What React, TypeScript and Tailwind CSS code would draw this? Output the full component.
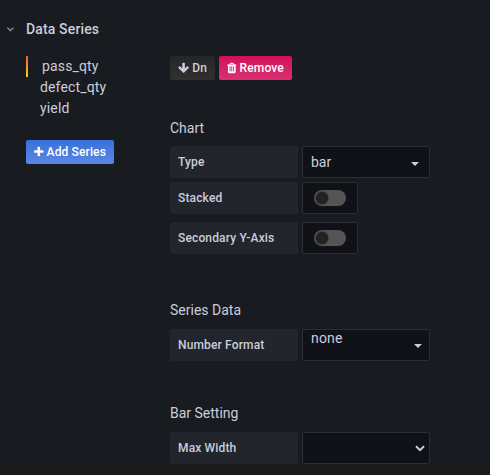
import type { ReactNode } from 'react';

function PlusIcon() {
  return (
    <svg className="mr-[3px] h-3 w-[9.6px] shrink-0 fill-current" viewBox="192 0 1408 1792">
      <path d="M1600 736v192q0 40-28 68t-68 28h-416v416q0 40-28 68t-68 28h-192q-40 0-68-28t-28-68v-416h-416q-40 0-68-28t-28-68v-192q0-40 28-68t68-28h416v-416q0-40 28-68t68-28h192q40 0 68 28t28 68v416h416q40 0 68 28t28 68z" />
    </svg>
  );
}

function ArrowDownIcon() {
  return (
    <svg className="mr-[3px] h-3 w-[11.2px] shrink-0 fill-current" viewBox="64 0 1664 1792">
      <path d="M1675 832q0 53-37 90l-651 652q-39 37-91 37-53 0-90-37l-651-652q-38-36-38-90 0-53 38-91l74-75q39-37 91-37 53 0 90 37l294 294v-704q0-52 38-90t90-38h128q52 0 90 38t38 90v704l294-294q37-37 90-37 52 0 91 37l75 75q37 39 37 91z" />
    </svg>
  );
}

function TrashIcon() {
  return (
    <svg className="mr-[3px] h-3 w-[9.6px] shrink-0 fill-current" viewBox="192 0 1408 1792">
      <path d="M704 1376v-704q0-14-9-23t-23-9h-64q-14 0-23 9t-9 23v704q0 14 9 23t23 9h64q14 0 23-9t9-23zm256 0v-704q0-14-9-23t-23-9h-64q-14 0-23 9t-9 23v704q0 14 9 23t23 9h64q14 0 23-9t9-23zm256 0v-704q0-14-9-23t-23-9h-64q-14 0-23 9t-9 23v704q0 14 9 23t23 9h64q14 0 23-9t9-23zm-544-992h448l-48-117q-7-9-17-11h-317q-10 2-17 11zm928 32v64q0 14-9 23t-23 9h-96v948q0 83-47 143.5t-113 60.5h-832q-66 0-113-58.5t-47-141.5v-952h-96q-14 0-23-9t-9-23v-64q0-14 9-23t23-9h309l70-167q15-37 54-63t79-26h320q40 0 79 26t54 63l70 167h309q14 0 23 9t9 23z" />
    </svg>
  );
}

function Label({ children }: { children: ReactNode }) {
  return (
    <div className="flex h-8 w-32 shrink-0 items-center rounded-xs bg-[#22252b] px-2 text-xs font-medium">
      {children}
    </div>
  );
}

function Row({ label, children, className = '' }: { label: string; children: ReactNode; className?: string }) {
  return (
    <div className={`flex gap-1 ${className}`}>
      <Label>{label}</Label>
      {children}
    </div>
  );
}

function Toggle() {
  return (
    <div className="flex h-8 w-14 items-center justify-center rounded-xs border border-[#2d2e33] bg-[#111217]">
      <div className="flex h-4 w-8 items-center rounded-full bg-[#555555] px-[2px]">
        <div className="size-3 rounded-full bg-[#222222] shadow-[0_0_2px_#111111]" />
      </div>
    </div>
  );
}

function Caret() {
  return (
    <svg className="h-1 w-2 shrink-0 fill-[#ccccdc]" viewBox="0 0 8 4">
      <path d="M0 0h8L4 4z" />
    </svg>
  );
}

function Heading({ children }: { children: ReactNode }) {
  return <h5 className="h-[21px] text-sm leading-[21px] font-normal tracking-normal">{children}</h5>;
}

export default function App() {
  return (
    <div className="flex h-[475px] w-[490px] flex-col overflow-hidden bg-[#181b1f] font-[Roboto,sans-serif] tracking-[0.15px] text-[#ccccdc]">
      <div className="flex h-14 items-start gap-[11px] pt-[18px] pl-[6px]">
        <svg className="mt-[7px] h-[9px] w-[9px]" viewBox="0 0 9 9" fill="none" stroke="#8e9297" strokeWidth="1.3">
          <path d="M1.3 2.6 4.4 5.5 7.5 2.6" />
        </svg>
        <span className="text-sm leading-[22px] font-medium">Data Series</span>
      </div>

      <div className="flex h-[412px] pl-[26px]">
        <div className="w-36 shrink-0">
          <ul className="text-sm leading-[21px]">
            <li className="flex">
              <span className="mr-[14px] w-[2px] bg-linear-to-b from-[#f05a28] to-[#fbca0a]" />
              pass_qty
            </li>
            <li className="pl-[14px]">defect_qty</li>
            <li className="pl-[14px]">yield</li>
          </ul>
          <button className="mt-[21px] flex h-6 w-[88px] items-center rounded-xs bg-linear-to-b from-[#3871dc] to-[#5a87e2] pl-2 text-xs font-medium tracking-[0.13px] whitespace-nowrap text-white">
            <PlusIcon />
            Add Series
          </button>
        </div>

        <div>
          <div className="flex gap-1 text-xs font-medium tracking-[0.13px]">
            <button className="flex h-6 w-[45px] items-center rounded-xs bg-linear-to-b from-[#262628] to-[#303030] pl-2">
              <ArrowDownIcon />
              Dn
            </button>
            <button className="flex h-6 w-[73px] items-center rounded-xs bg-linear-to-b from-[#d10e5c] to-[#d92f72] pl-2 text-white">
              <TrashIcon />
              Remove
            </button>
          </div>

          <section className="mt-[38px]">
            <Heading>Chart</Heading>
            <Row label="Type" className="mt-[7px]">
              <div className="flex h-8 w-32 items-center justify-between rounded-xs border border-[#2d2e33] bg-[#111217] pr-[10px] pl-2 text-sm tracking-normal">
                bar
                <span className="pt-1 leading-none">
                  <Caret />
                </span>
              </div>
            </Row>
            <Row label="Stacked" className="mt-1">
              <Toggle />
            </Row>
            <Row label="Secondary Y-Axis" className="mt-2">
              <Toggle />
            </Row>
          </section>

          <section className="mt-[46px]">
            <Heading>Series Data</Heading>
            <Row label="Number Format" className="mt-2">
              <div className="flex h-8 w-32 justify-between rounded-xs border border-[#2d2e33] bg-[#111217] pr-[7px] pl-2 text-sm leading-[17px]">
                none
                <span className="pt-[14px] leading-none">
                  <Caret />
                </span>
              </div>
            </Row>
          </section>

          <section className="mt-[42px]">
            <Heading>Bar Setting</Heading>
            <Row label="Max Width" className="mt-2">
              <div className="flex h-8 w-32 items-center justify-end rounded-xs border border-[#2d2e33] bg-[#111217] pr-1">
                <svg className="h-[7px] w-[10px]" viewBox="0 0 10 7" fill="none" stroke="#ccccdc" strokeWidth="2">
                  <path d="M1 1.2 5 5.2 9 1.2" />
                </svg>
              </div>
            </Row>
          </section>
        </div>
      </div>
      <div className="flex-1 bg-[#1c1b1c]" />
    </div>
  );
}
